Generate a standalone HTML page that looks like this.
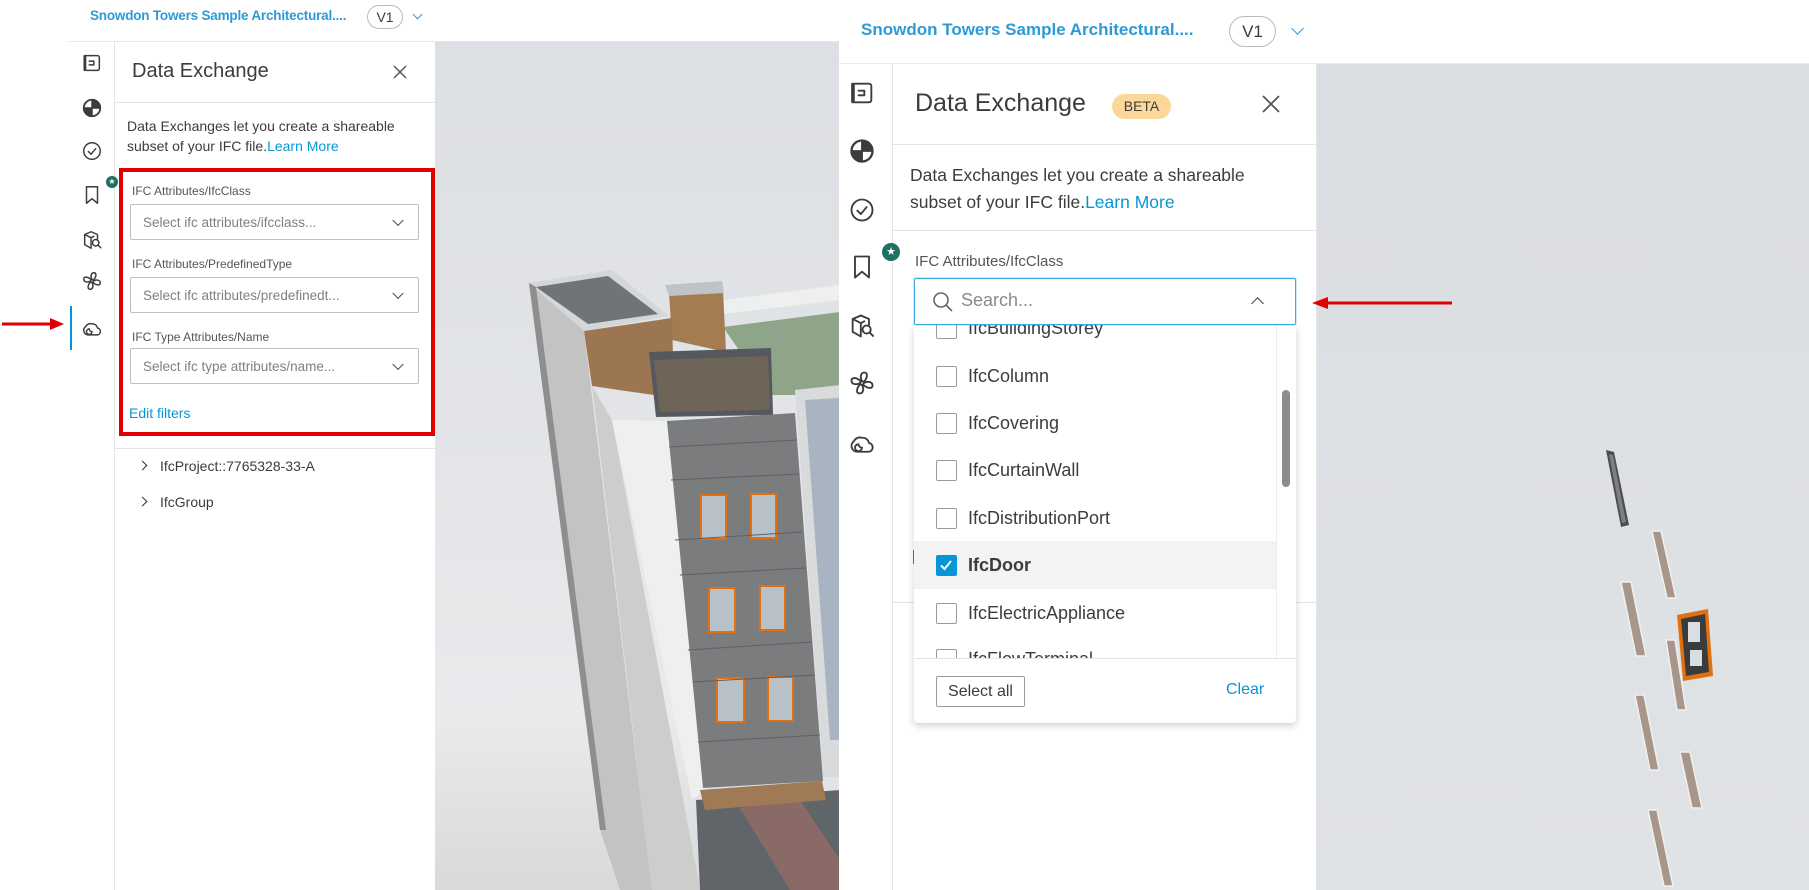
<!DOCTYPE html>
<html><head><meta charset="utf-8"><style>
*{box-sizing:border-box;margin:0;padding:0}
body{width:1809px;height:890px;overflow:hidden;background:#fff;font-family:"Liberation Sans",sans-serif;position:relative;color:#3c3c3c}
.a{position:absolute}
.ic{position:absolute;fill:none;stroke:#3c3c3c;stroke-width:1.6;stroke-linecap:round;stroke-linejoin:round}
.blue{color:#0696d7}
.sel{position:absolute;border:1px solid #bfbfbf;border-radius:2px;background:#fff;font-size:13.5px;color:#808080;padding-left:12px;display:flex;align-items:center}
.chev{position:absolute;right:16px;top:50%;width:8px;height:8px;border-right:1.6px solid #3c3c3c;border-bottom:1.6px solid #3c3c3c;transform:translateY(-70%) rotate(45deg)}
.lbl{position:absolute;font-size:12px;color:#555}
.item{position:absolute;left:914px;width:362px;height:48px;font-size:18px;color:#3c3c3c;display:flex;align-items:center}
.cb{position:absolute;left:22px;width:21px;height:21px;border:1.5px solid #9a9a9a;border-radius:2px;background:#fff}
.item span{position:absolute;left:54px}
</style></head><body>
<svg width="0" height="0" style="position:absolute">
<defs>
<symbol id="i1" viewBox="0 0 24 24"><path d="M5 4h13a2 2 0 0 1 2 2v12a2 2 0 0 1-2 2H5z M5 4v16" /><path d="M4 4.5v15" stroke-width="2.6"/><path d="M9 10h5v4H9" /></symbol>
<symbol id="i2" viewBox="0 0 24 24"><circle cx="12" cy="12" r="9" stroke-width="2"/><path d="M12 12V3A9 9 0 0 1 21 12Z M12 12H3A9 9 0 0 0 12 21Z" fill="#3c3c3c"/></symbol>
<symbol id="i3" viewBox="0 0 24 24"><circle cx="12" cy="12" r="9"/><path d="M8 12.5l3 3 5-6"/></symbol>
<symbol id="i4" viewBox="0 0 24 24"><path d="M6 3h12v18l-6-5-6 5z"/></symbol>
<symbol id="i5" viewBox="0 0 24 24"><path d="M11 3l7 3v5 M11 3L4 6v11l7 4 M4 6l7 3.5 3 -1.5 M11 9.5v11"/><circle cx="16" cy="15" r="3.5"/><path d="M18.5 17.5l3 3"/></symbol>
<symbol id="i6" viewBox="0 0 24 24"><circle cx="12" cy="12" r="1.6"/><path d="M12 10.4C10 7 11 3 14 3s3 4 0 7.5 M13.6 12c3.4-2 7.4-1 7.4 2s-4 3-7.5 0 M12 13.6c2 3.4 1 7.4-2 7.4s-3-4 0-7.5 M10.4 12C7 14 3 13 3 10s4-3 7.5 0"/></symbol>
<symbol id="i7" viewBox="0 0 24 24"><path d="M13 7.5a5.5 5.5 0 0 1 5 4.5 3.8 3.8 0 0 1 0 7.5H8"/><path d="M8 19.5a5 5 0 0 1-3-9 6 6 0 0 1 7-3"/><path d="M12 16a3 3 0 1 1-3-3 M9 13a3 3 0 0 0 3 3"/></symbol>
</defs></svg>

<!-- LEFT SCREEN -->
<div class="a" style="left:90px;top:8px;font-size:13.5px;font-weight:bold;color:#2d9ad6;letter-spacing:-0.2px">Snowdon Towers Sample Architectural....</div>
<div class="a" style="left:367px;top:5px;width:36px;height:24px;border:1px solid #bbb;border-radius:12px;font-size:14px;text-align:center;line-height:22px;background:#fff">V1</div>
<div class="a" style="left:414px;top:11px;width:7px;height:7px;border-right:1.5px solid #2d9ad6;border-bottom:1.5px solid #2d9ad6;transform:rotate(45deg)"></div>
<div class="a" style="left:69px;top:41px;width:771px;height:1px;background:#e6e6e6"></div>
<div class="a" style="left:114px;top:42px;width:1px;height:848px;background:#e4e4e4"></div>
<svg class="ic" style="left:81px;top:52px" width="22" height="22"><use href="#i1"/></svg>
<svg class="ic" style="left:81px;top:97px" width="22" height="22"><use href="#i2"/></svg>
<svg class="ic" style="left:81px;top:140px" width="22" height="22"><use href="#i3"/></svg>
<svg class="ic" style="left:81px;top:184px" width="22" height="22"><use href="#i4"/></svg>
<svg class="ic" style="left:81px;top:229px" width="22" height="22"><use href="#i5"/></svg>
<svg class="ic" style="left:81px;top:270px" width="22" height="22"><use href="#i6"/></svg>
<svg class="ic" style="left:81px;top:317px" width="22" height="22"><use href="#i7"/></svg>
<div class="a" style="left:106px;top:176px;width:12px;height:12px;border-radius:50%;background:#1f6f62;color:#fff;font-size:8px;text-align:center;line-height:12px">★</div>
<div class="a" style="left:70px;top:306px;width:2px;height:44px;background:#0696d7"></div>
<svg class="a" style="left:0;top:316px" width="66" height="16"><path d="M2 8H52" stroke="#e10000" stroke-width="3"/><path d="M50 2L64 8 50 14z" fill="#e10000"/></svg>

<div class="a" style="left:132px;top:60px;font-size:20px;color:#3c3c3c">Data Exchange</div>
<svg class="a" style="left:392px;top:64px" width="16" height="16"><path d="M2 2L14 14M14 2L2 14" stroke="#555" stroke-width="1.5"/></svg>
<div class="a" style="left:115px;top:102px;width:320px;height:1px;background:#e4e4e4"></div>
<div class="a" style="left:127px;top:116px;font-size:14px;line-height:20px;color:#3c3c3c;width:300px">Data Exchanges let you create a shareable subset of your IFC file.<span class="blue">Learn More</span></div>
<div class="a" style="left:119px;top:168px;width:316px;height:268px;border:4.5px solid #e10000"></div>
<div class="lbl" style="left:132px;top:184px">IFC Attributes/IfcClass</div>
<div class="sel" style="left:130px;top:204px;width:289px;height:36px">Select ifc attributes/ifcclass...<span class="chev"></span></div>
<div class="lbl" style="left:132px;top:257px">IFC Attributes/PredefinedType</div>
<div class="sel" style="left:130px;top:277px;width:289px;height:36px">Select ifc attributes/predefinedt...<span class="chev"></span></div>
<div class="lbl" style="left:132px;top:330px">IFC Type Attributes/Name</div>
<div class="sel" style="left:130px;top:348px;width:289px;height:36px">Select ifc type attributes/name...<span class="chev"></span></div>
<div class="a blue" style="left:129px;top:405px;font-size:14px">Edit filters</div>
<div class="a" style="left:115px;top:448px;width:320px;height:1px;background:#e4e4e4"></div>
<div class="a" style="left:139px;top:462px;width:7px;height:7px;border-right:1.6px solid #333;border-bottom:1.6px solid #333;transform:rotate(-45deg)"></div>
<div class="a" style="left:160px;top:458px;font-size:14px">IfcProject::7765328-33-A</div>
<div class="a" style="left:139px;top:498px;width:7px;height:7px;border-right:1.6px solid #333;border-bottom:1.6px solid #333;transform:rotate(-45deg)"></div>
<div class="a" style="left:160px;top:494px;font-size:14px">IfcGroup</div>

<!-- left viewport -->
<div class="a" style="left:435px;top:42px;width:404px;height:848px;background:linear-gradient(180deg,#dcdfe3 0%,#e3e5e8 50%,#e9eaec 80%,#d8d9db 100%)"></div>
<svg class="a" style="left:435px;top:42px" width="404" height="848" viewBox="435 42 404 848">
<polygon points="723,327 840,312 840,395 770,395" fill="#8fa58a"/>
<polygon points="723,300 840,285 840,300 724,314" fill="#eef0f0"/>
<polygon points="696,800 840,790 840,890 700,890" fill="#60656a"/>
<polygon points="740,808 800,800 840,860 840,890 790,890" fill="#8a6a66"/>
<polygon points="669,293 723,290 726,352 672,340" fill="#a37c52"/>
<polygon points="665,285 722,281 724,293 669,296" fill="#c0c3c6"/>
<polygon points="584,331 672,318 674,398 592,386" fill="#9c7650"/>
<polygon points="529,283 612,270 669,316 584,331" fill="#d4d6d8"/>
<polygon points="536,287 608,276 658,314 588,324" fill="#6f7479"/>
<polygon points="649,352 771,348 773,415 656,417" fill="#55595e"/>
<polygon points="654,360 768,356 770,410 660,412" fill="#7a6a55" opacity=".7"/>
<polygon points="529,283 584,331 652,890 620,890 600,830" fill="#c3c3c2"/>
<polygon points="529,283 536,287 606,830 600,830" fill="#8e8e8e"/>
<polygon points="592,386 612,420 700,890 652,890" fill="#cdcdcc"/>
<polygon points="612,420 668,421 705,790 692,800" fill="#eef0f0"/>
<polygon points="667,421 795,413 823,781 703,788" fill="#7b7c7e"/>
<polygon points="700,790 822,781 826,800 705,810" fill="#9f7a55"/>
<polygon points="795,390 840,385 840,777 823,777" fill="#d9dadb"/>
<polygon points="805,400 840,398 840,740 830,740" fill="#a9b4c2"/>
<g fill="#b8c0c8" stroke="#e07010" stroke-width="2">
<rect x="701" y="495" width="25" height="44"/><rect x="751" y="494" width="25" height="44"/>
<rect x="709" y="588" width="26" height="44"/><rect x="760" y="586" width="25" height="44"/>
<rect x="717" y="678" width="27" height="44"/><rect x="768" y="677" width="25" height="44"/>
</g>
<g stroke="#5f6063" stroke-width="1"><path d="M669 447L797 440M671 480L799 474M675 540L802 532M680 575L805 568M688 650L812 642M693 682L815 675M698 742L820 735"/></g>
</svg>

<!-- RIGHT SCREEN -->
<div class="a" style="left:839px;top:0;width:970px;height:890px;background:#fff"></div>
<div class="a" style="left:861px;top:20px;font-size:17px;font-weight:bold;color:#2d9ad6">Snowdon Towers Sample Architectural....</div>
<div class="a" style="left:1229px;top:16px;width:47px;height:31px;border:1px solid #bbb;border-radius:16px;font-size:17px;text-align:center;line-height:29px">V1</div>
<div class="a" style="left:1293px;top:24px;width:9px;height:9px;border-right:1.6px solid #2d9ad6;border-bottom:1.6px solid #2d9ad6;transform:rotate(45deg)"></div>
<div class="a" style="left:839px;top:63px;width:970px;height:1px;background:#ececec"></div>
<div class="a" style="left:892px;top:64px;width:1px;height:826px;background:#e4e4e4"></div>
<svg class="ic" style="left:848px;top:79px" width="28" height="28"><use href="#i1"/></svg>
<svg class="ic" style="left:848px;top:137px" width="28" height="28"><use href="#i2"/></svg>
<svg class="ic" style="left:848px;top:196px" width="28" height="28"><use href="#i3"/></svg>
<svg class="ic" style="left:848px;top:253px" width="28" height="28"><use href="#i4"/></svg>
<svg class="ic" style="left:848px;top:312px" width="28" height="28"><use href="#i5"/></svg>
<svg class="ic" style="left:848px;top:369px" width="28" height="28"><use href="#i6"/></svg>
<svg class="ic" style="left:848px;top:429px" width="28" height="28"><use href="#i7"/></svg>
<div class="a" style="left:882px;top:243px;width:18px;height:18px;border-radius:50%;background:#1f6f62;color:#fff;font-size:11px;text-align:center;line-height:18px">★</div>

<div class="a" style="left:915px;top:89px;font-size:25px;color:#3c3c3c">Data Exchange</div>
<div class="a" style="left:1112px;top:94px;width:59px;height:25px;border-radius:13px;background:#fbd89a;font-size:14px;text-align:center;line-height:25px;color:#3c3c3c">BETA</div>
<svg class="a" style="left:1261px;top:94px" width="20" height="20"><path d="M2 2L18 18M18 2L2 18" stroke="#555" stroke-width="1.8"/></svg>
<div class="a" style="left:893px;top:144px;width:423px;height:1px;background:#e4e4e4"></div>
<div class="a" style="left:910px;top:162px;font-size:17.5px;line-height:27px;color:#3c3c3c;width:370px">Data Exchanges let you create a shareable subset of your IFC file.<span class="blue">Learn More</span></div>
<div class="a" style="left:893px;top:230px;width:423px;height:1px;background:#e4e4e4"></div>
<div class="a" style="left:915px;top:253px;font-size:15px;color:#555">IFC Attributes/IfcClass</div>
<div class="a" style="left:913px;top:550px;width:3px;height:14px;background:#0696d7"></div>
<div class="a" style="left:893px;top:602px;width:423px;height:1px;background:#e4e4e4"></div>
<div class="a" style="left:1316px;top:64px;width:1px;height:826px;background:#e4e4e4"></div>

<!-- dropdown -->
<div class="a" style="left:914px;top:325px;width:382px;height:398px;background:#fff;border-radius:0 0 4px 4px;box-shadow:0 3px 8px rgba(0,0,0,.18);overflow:hidden">
</div>
<div class="a" style="left:914px;top:325px;width:362px;height:333px;overflow:hidden">
 <div class="item" style="left:0;top:-21px"><div class="cb"></div><span>IfcBuildingStorey</span></div>
 <div class="item" style="left:0;top:27px"><div class="cb"></div><span>IfcColumn</span></div>
 <div class="item" style="left:0;top:74px"><div class="cb"></div><span>IfcCovering</span></div>
 <div class="item" style="left:0;top:121px"><div class="cb"></div><span>IfcCurtainWall</span></div>
 <div class="item" style="left:0;top:169px"><div class="cb"></div><span>IfcDistributionPort</span></div>
 <div class="item" style="left:0;top:216px;background:#f3f3f3"><div class="cb" style="background:#0696d7;border-color:#0696d7"><svg width="18" height="18" style="position:absolute;left:0;top:0"><path d="M4 9.5l3.5 3.5 6.5-8" stroke="#fff" stroke-width="2" fill="none"/></svg></div><span style="font-weight:bold">IfcDoor</span></div>
 <div class="item" style="left:0;top:264px"><div class="cb"></div><span>IfcElectricAppliance</span></div>
 <div class="item" style="left:0;top:310px"><div class="cb"></div><span>IfcFlowTerminal</span></div>
</div>
<div class="a" style="left:1276px;top:325px;width:1px;height:333px;background:#ececec"></div>
<div class="a" style="left:1282px;top:390px;width:8px;height:97px;border-radius:4px;background:#8c8c8c"></div>
<div class="a" style="left:914px;top:658px;width:382px;height:1px;background:#e4e4e4"></div>
<div class="a" style="left:936px;top:676px;width:89px;height:31px;border:1px solid #9a9a9a;border-radius:2px;font-size:16px;text-align:center;line-height:29px">Select all</div>
<div class="a blue" style="left:1226px;top:681px;font-size:16px">Clear</div>
<div class="a" style="left:914px;top:278px;width:382px;height:47px;border:1.5px solid #38abdf;border-radius:2px;background:#fff;box-shadow:0 0 0 1px rgba(56,171,223,.25)"></div>
<svg class="a" style="left:931px;top:290px" width="24" height="24"><circle cx="10" cy="10" r="7" fill="none" stroke="#666" stroke-width="1.6"/><path d="M15 15l6 6" stroke="#666" stroke-width="1.6"/></svg>
<div class="a" style="left:961px;top:290px;font-size:18px;color:#8a8a8a">Search...</div>
<div class="a" style="left:1253px;top:299px;width:9px;height:9px;border-left:1.8px solid #444;border-top:1.8px solid #444;transform:rotate(45deg)"></div>

<!-- right viewport -->
<div class="a" style="left:1317px;top:64px;width:492px;height:826px;background:linear-gradient(180deg,#dadde1 0%,#dee1e4 60%,#e0e3e5 100%)"></div>
<svg class="a" style="left:1310px;top:294px" width="150" height="18"><path d="M14 9H142" stroke="#e10000" stroke-width="3"/><path d="M2 9L18 3 18 15z" fill="#e10000"/></svg>
<svg class="a" style="left:1317px;top:64px" width="492" height="826" viewBox="1317 64 492 826">
<polygon points="1606,450 1614,452 1629,525 1621,527" fill="#4b4d50"/>
<polygon points="1609,454 1613,455 1626,522 1622,523" fill="#7d7f82"/>
<g fill="#a8968a" stroke="#f0f0f0" stroke-width="1.5">
<polygon points="1652,531 1661,531 1676,598 1667,598"/>
<polygon points="1621,582 1631,582 1646,656 1636,656"/>
<polygon points="1666,640 1675,640 1686,710 1677,710"/>
<polygon points="1635,695 1644,695 1659,770 1650,770"/>
<polygon points="1680,752 1690,752 1702,808 1692,808"/>
<polygon points="1648,810 1657,810 1673,886 1664,886"/>
</g>
<polygon points="1677,615 1708,609 1713,676 1683,681" fill="#e07010"/>
<polygon points="1681,619 1705,614 1709,672 1686,676" fill="#3a3b3d"/>
<rect x="1688" y="622" width="12" height="20" fill="#dadde1"/>
<rect x="1690" y="650" width="12" height="16" fill="#dadde1"/>
</svg>
</body></html>
